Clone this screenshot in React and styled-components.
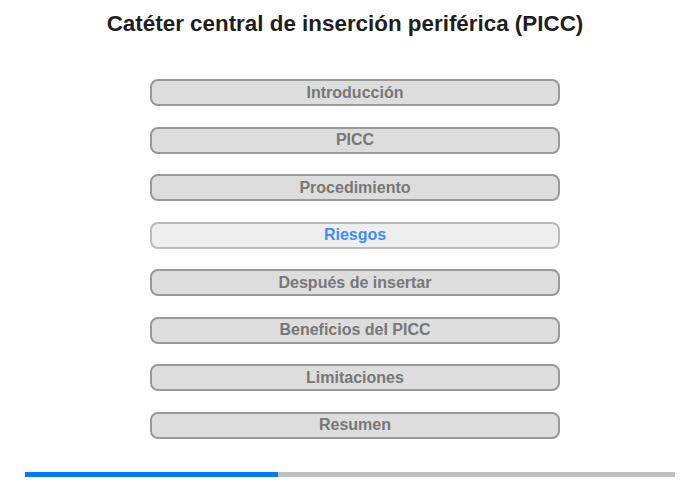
import React, { useState } from 'react';
import styled, { createGlobalStyle, css } from 'styled-components';

const GlobalStyle = createGlobalStyle`
  body {
    margin: 0;
    background: #fff;
    font-family: "Liberation Sans", Arial, sans-serif;
  }
`;

const sections = [
  'Introducción',
  'PICC',
  'Procedimiento',
  'Riesgos',
  'Después de insertar',
  'Beneficios del PICC',
  'Limitaciones',
  'Resumen',
];

function App() {
  const [active, setActive] = useState(3);

  return (
    <Page>
      <GlobalStyle />
      <Title>Catéter central de inserción periférica (PICC)</Title>
      <Menu>
        {sections.map((s, i) => (
          <MenuButton key={s} active={i === active} onClick={() => setActive(i)}>
            {s}
          </MenuButton>
        ))}
      </Menu>
      <Progress>
        <ProgressFill style={{ width: `${(253 / 650) * 100}%` }} />
      </Progress>
    </Page>
  );
}

const Page = styled.div`
  width: 700px;
  height: 480px;
  display: flex;
  flex-direction: column;
  align-items: center;
  box-sizing: border-box;
  padding-top: 11px;
`;

const Title = styled.h1`
  margin: 0 10px 0 0;
  font-size: 22.4px;
  font-weight: bold;
  color: #1e1e1e;
  line-height: 26px;
`;

const Menu = styled.nav`
  margin-top: 42px;
  margin-left: 10px;
  display: flex;
  flex-direction: column;
  gap: 20.5px;
`;

const MenuButton = styled.button`
  width: 410px;
  height: 27px;
  box-sizing: border-box;
  border: 2px solid #999;
  border-radius: 8px;
  background: #dddddd;
  color: #777;
  font-family: "Liberation Sans", Arial, sans-serif;
  font-size: 16px;
  font-weight: bold;
  padding: 0;
  cursor: pointer;

  ${props => props.active && css`
    background: #eeeeee;
    border-color: #bbb;
    color: #3b8eff;
  `}
`;

const Progress = styled.div`
  margin-top: auto;
  margin-bottom: 3px;
  width: 650px;
  height: 5px;
  background: #c0c0c0;
`;

const ProgressFill = styled.div`
  height: 100%;
  background: #007bff;
`;

export default App;
